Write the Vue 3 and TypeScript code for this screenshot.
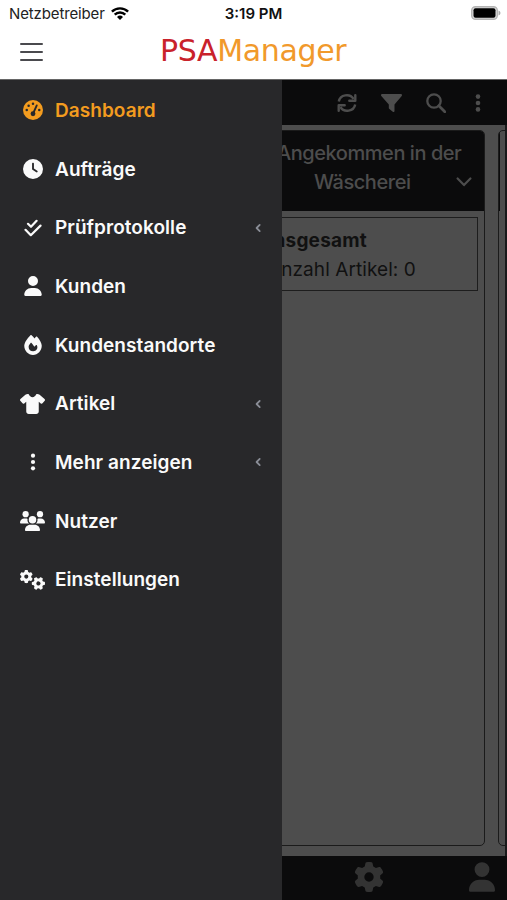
<script setup lang="ts">
interface MenuEntry {
  icon: string
  label: string
  active?: boolean
  expandable?: boolean
}

const entries: MenuEntry[] = [
  { icon: 'gauge', label: 'Dashboard', active: true },
  { icon: 'clock', label: 'Aufträge' },
  { icon: 'checks', label: 'Prüfprotokolle', expandable: true },
  { icon: 'user', label: 'Kunden' },
  { icon: 'fire', label: 'Kundenstandorte' },
  { icon: 'shirt', label: 'Artikel', expandable: true },
  { icon: 'dots', label: 'Mehr anzeigen', expandable: true },
  { icon: 'users', label: 'Nutzer' },
  { icon: 'gears', label: 'Einstellungen' },
]

const gear =
  'M495.9 166.6c3.2 8.7 .5 18.4-6.4 24.6l-43.3 39.4c1.1 8.3 1.7 16.8 1.7 25.4s-.6 17.1-1.7 25.4l43.3 39.4c6.9 6.2 9.6 15.9 6.4 24.6c-4.4 11.9-9.7 23.3-15.8 34.3l-4.7 8.1c-6.6 11-14 21.4-22.1 31.2c-5.9 7.2-15.7 9.6-24.5 6.8l-55.7-17.7c-13.4 10.3-28.2 18.9-44 25.4l-12.5 57.1c-2 9.1-9 16.3-18.2 17.8c-13.8 2.3-28 3.5-42.5 3.5s-28.7-1.2-42.5-3.5c-9.2-1.5-16.2-8.7-18.2-17.8l-12.5-57.1c-15.8-6.5-30.6-15.1-44-25.4L83.1 425.9c-8.8 2.8-18.6 .3-24.5-6.8c-8.1-9.8-15.5-20.2-22.1-31.2l-4.7-8.1c-6.1-11-11.4-22.4-15.8-34.3c-3.2-8.7-.5-18.4 6.4-24.6l43.3-39.4C64.6 273.1 64 264.6 64 256s.6-17.1 1.7-25.4L22.4 191.2c-6.9-6.2-9.6-15.9-6.4-24.6c4.4-11.9 9.7-23.3 15.8-34.3l4.7-8.1c6.6-11 14-21.4 22.1-31.2c5.9-7.2 15.7-9.6 24.5-6.8l55.7 17.7c13.4-10.3 28.2-18.9 44-25.4l12.5-57.1c2-9.1 9-16.3 18.2-17.8C227.3 1.2 241.5 0 256 0s28.7 1.2 42.5 3.5c9.2 1.5 16.2 8.7 18.2 17.8l12.5 57.1c15.8 6.5 30.6 15.1 44 25.4l55.7-17.7c8.8-2.8 18.6-.3 24.5 6.8c8.1 9.8 15.5 20.2 22.1 31.2l4.7 8.1c6.1 11 11.4 22.4 15.8 34.3zM256 336a80 80 0 1 0 0-160 80 80 0 1 0 0 160z'
const user =
  'M224 256A128 128 0 1 0 224 0a128 128 0 1 0 0 256zm-45.7 48C79.8 304 0 383.8 0 482.3C0 498.7 13.3 512 29.7 512H418.3c16.4 0 29.7-13.3 29.7-29.7C448 383.8 368.2 304 269.7 304H178.3z'
const shirt =
  'M211.8 0c7.8 0 14.3 5.7 16.7 13.2C240.8 51.9 277.1 80 320 80s79.2-28.1 91.5-66.8C413.9 5.7 420.4 0 428.2 0h12.6c22.5 0 44.2 7.9 61.5 22.3L628.5 127.4c6.6 5.5 10.7 13.5 11.4 22.1s-2.1 17.1-7.8 23.6l-56 64c-11.4 13.1-31.2 14.6-44.6 3.5L480 197.7V448c0 35.3-28.7 64-64 64H224c-35.3 0-64-28.7-64-64V197.7l-51.5 42.9c-13.3 11.1-33.1 9.6-44.6-3.5l-56-64c-5.7-6.5-8.5-15-7.8-23.6s4.8-16.6 11.4-22.1L137.7 22.3C155 7.9 176.7 0 199.2 0h12.6z'
const fire =
  'M159.3 5.4c7.8-7.3 19.9-7.2 27.7 .1c27.6 25.9 53.5 53.8 77.7 84c11-14.4 23.5-30.1 37-42.9c7.9-7.4 20.1-7.4 28 .1c34.6 33 63.9 76.6 84.5 118c20.3 40.8 33.8 82.5 33.8 111.9C448 404.2 348.2 512 224 512C98.4 512 0 404.1 0 276.5c0-38.4 17.8-85.3 45.4-131.7C73.3 97.7 112.7 48.6 159.3 5.4zM225.7 416c25.3 0 47.7-7 68.8-21c42.1-29.4 53.4-88.2 28.1-134.4c-4.5-9-16-9.6-22.5-2l-25.2 29.3c-6.6 7.6-18.5 7.4-24.7-.5c-16.5-21-46-58.5-62.8-79.8c-6.3-8-18.3-8.1-24.7-.1c-33.8 42.5-50.8 69.3-50.8 99.4C112 375.4 162.6 416 225.7 416z'
const clock =
  'M256 0a256 256 0 1 1 0 512A256 256 0 1 1 256 0zM232 120V256c0 8 4 15.5 10.7 20l96 64c11 7.4 25.9 4.4 33.3-6.7s4.4-25.9-6.7-33.3L280 243.2V120c0-13.3-10.7-24-24-24s-24 10.7-24 24z'
</script>

<template>
  <div class="app">
    <div class="status">
      <span class="carrier">Netzbetreiber</span>
      <svg class="wifi" viewBox="0 0 18 13" width="18" height="13">
        <g fill="none" stroke="#000" stroke-width="2.4">
          <path d="M.9 4.700a11.500 11.500 0 0 1 16.200 0" />
          <path d="M3.700 7.700a7.500 7.500 0 0 1 10.600 0" />
        </g>
        <path d="M9 13 6 9.900a4.300 4.300 0 0 1 6 0z" />
      </svg>
      <span class="time">3:19 PM</span>
      <svg class="battery" viewBox="0 0 30 14" width="30" height="14">
        <rect x=".7" y=".7" width="25.600" height="12.600" rx="3.800" fill="#ddd" stroke="#b4b4b4" stroke-width="1.400" />
        <rect x="2.500" y="2.300" width="22" height="9.400" rx="2" />
        <path d="M27.500 4.500c2.600 1 2.600 4 0 5z" fill="#aaa" />
      </svg>
    </div>

    <header class="brandbar">
      <button class="burger" aria-label="Menü"><i /><i /><i /></button>
      <div class="logo"><span>PSA</span>Manager</div>
    </header>

    <div class="stage">
      <main class="page">
        <div class="toolbar">
          <svg width="20" height="20" viewBox="0 0 20 20" fill="none" stroke="currentColor" stroke-width="2.400">
            <path d="M1.800 8.500A8 7.500 0 0 1 16.600 6M18.200 11.500A8 7.500 0 0 1 3.400 14" />
            <path d="M18.300 2.200v5.600h-6M1.700 17.800v-5.600h6" stroke-linejoin="round" stroke-linecap="round" />
          </svg>
          <svg width="21" height="18" viewBox="0 0 21 18" fill="currentColor">
            <path d="M1.200 0h18.600c1 0 1.500 1.100.9 1.900L13.500 10.400v6.500c0 .9-1 1.400-1.700.8l-3.400-2.600c-.4-.3-.6-.6-.6-1.100v-3.600L.3 1.900C-.3 1.100.2 0 1.200 0z" />
          </svg>
          <svg width="20" height="20" viewBox="0 0 20 20" fill="none" stroke="currentColor" stroke-width="2.300">
            <circle cx="8" cy="8" r="6.700" /><path d="m12.800 12.800 6 6" stroke-linecap="round" stroke-width="2.700" />
          </svg>
          <svg class="more" width="6" height="18" viewBox="0 0 6 18" fill="currentColor">
            <circle cx="3" cy="2.600" r="2.300" /><circle cx="3" cy="9" r="2.300" /><circle cx="3" cy="15.400" r="2.300" />
          </svg>
        </div>

        <div class="board">
          <section class="column">
            <div class="column-head">
              <span class="first">Angekommen in der</span>
              <span class="second">Wäscherei</span>
              <svg class="down" width="16" height="10" viewBox="0 0 16 10" fill="none" stroke="currentColor" stroke-width="2.200" stroke-linecap="round" stroke-linejoin="round">
                <path d="m1.600 1.500 6.400 6.600 6.400-6.600" />
              </svg>
            </div>
            <article class="card">
              <strong>Insgesamt</strong>
              <span>Anzahl Artikel: 0</span>
            </article>
          </section>
          <section class="column next"><div class="edge" /></section>
        </div>

        <footer class="tabs">
          <svg width="30" height="30" viewBox="0 0 512 512" fill="currentColor"><path :d="gear" /></svg>
          <svg width="26" height="30" viewBox="0 0 448 512" fill="currentColor"><path :d="user" /></svg>
        </footer>
      </main>

      <nav class="drawer">
        <a v-for="e in entries" :key="e.label" class="entry" :class="{ active: e.active }">
          <span class="glyph">
            <svg v-if="e.icon === 'gauge'" width="20" height="20" viewBox="0 0 512 512">
              <circle cx="256" cy="256" r="256" fill="currentColor" />
              <g fill="#28282a">
                <circle cx="256" cy="96" r="32" /><circle cx="144" cy="144" r="32" />
                <circle cx="96" cy="256" r="32" /><circle cx="416" cy="256" r="32" />
                <circle cx="256" cy="352" r="62" />
              </g>
              <path d="m256 352 96-213" stroke="#28282a" stroke-width="48" stroke-linecap="round" />
            </svg>
            <svg v-else-if="e.icon === 'clock'" width="20" height="20" viewBox="0 0 512 512"><path :d="clock" fill="currentColor" /></svg>
            <svg v-else-if="e.icon === 'checks'" width="18" height="18" viewBox="0 0 18 18" fill="none" stroke="currentColor" stroke-width="2.200" stroke-linecap="round" stroke-linejoin="round">
              <path d="m4 4.800 3 3 5.600-6M1.500 10.800l5.300 5.400 9.700-9.600" />
            </svg>
            <svg v-else-if="e.icon === 'user'" width="18" height="20" viewBox="0 0 448 512"><path :d="user" fill="currentColor" /></svg>
            <svg v-else-if="e.icon === 'fire'" width="18" height="20" viewBox="0 0 448 512"><path :d="fire" fill="currentColor" /></svg>
            <svg v-else-if="e.icon === 'shirt'" width="25" height="20" viewBox="0 0 640 512"><path :d="shirt" fill="currentColor" /></svg>
            <svg v-else-if="e.icon === 'dots'" width="6" height="18" viewBox="0 0 6 18" fill="currentColor">
              <circle cx="3" cy="2.700" r="2.100" /><circle cx="3" cy="9" r="2.100" /><circle cx="3" cy="15.300" r="2.100" />
            </svg>
            <svg v-else-if="e.icon === 'users'" width="25" height="20" viewBox="0 0 640 512" fill="currentColor">
              <circle cx="144" cy="80" r="80" /><circle cx="512" cy="80" r="80" /><circle cx="320" cy="224" r="96" />
              <path d="M0 298.700C0 239.800 47.800 192 106.700 192h42.700c15.900 0 31 3.500 44.600 9.700C182 250 200 293 235.200 320H21.300C9.600 320 0 310.400 0 298.700zM405 320c35-27 53-70 41-118.300 14-6.200 29-9.700 45-9.700h42.700C592.200 192 640 239.800 640 298.700c0 11.700-9.600 21.300-21.300 21.300zM128 485.300C128 411.700 187.700 352 261.300 352h117.400C452.300 352 512 411.700 512 485.300c0 14.700-12 26.700-26.700 26.700H154.700c-14.700 0-26.700-12-26.700-26.700z" />
            </svg>
            <svg v-else width="25" height="20" viewBox="0 0 640 512" fill="currentColor">
              <path :d="gear" transform="translate(-8 0) scale(.66)" />
              <path :d="gear" transform="translate(471 344) rotate(30) scale(.66) translate(-256 -256)" />
            </svg>
          </span>
          <span class="label">{{ e.label }}</span>
          <svg v-if="e.expandable" class="caret" width="6" height="10" viewBox="0 0 6 10" fill="none" stroke="#8a8d96" stroke-width="1.800" stroke-linecap="round" stroke-linejoin="round">
            <path d="M4.700 1.900 1.600 5l3.100 3.100" />
          </svg>
        </a>
      </nav>
    </div>
  </div>
</template>

<style>
body { margin: 0; background: #fff; }
</style>

<style scoped>
* { box-sizing: border-box; }
.app {
  width: 507px;
  height: 900px;
  display: flex;
  flex-direction: column;
  overflow: hidden;
  background: #fff;
  font-family: Inter, "Liberation Sans", sans-serif;
}
.status {
  height: 28px;
  display: grid;
  grid-template-columns: auto auto 1fr auto;
  align-items: center;
  padding: 0 6px 2px 9px;
  color: #111;
  font-size: 15px;
}
.carrier { letter-spacing: -0.13px; color: #222; }
.wifi { margin-left: 6px; }
.time { padding-left: 96px; font-weight: 600; }
.brandbar {
  height: 51px;
  display: flex;
  align-items: center;
  padding: 0 20px 4px;
}
.burger {
  width: 23px;
  padding: 0;
  border: 0;
  background: none;
  display: flex;
  flex-direction: column;
  gap: 6px;
}
.burger i { height: 2px; border-radius: 1px; background: #4a4a4e; }
.logo {
  margin: -2px 0 0 117px;
  font-family: "DejaVu Sans", sans-serif;
  font-size: 30px;
  letter-spacing: -0.35px;
  line-height: 40px;
  color: #f1992b;
}
.logo span { color: #c9222b; }
.stage { flex: 1; display: grid; min-height: 0; border-top: 1px solid #666; }
.page, .drawer { grid-area: 1 / 1; min-height: 0; }
.page { display: flex; flex-direction: column; background: #4d4d4d; min-width: 0; }
.toolbar {
  height: 45px;
  display: flex;
  align-items: center;
  justify-content: flex-end;
  gap: 24px;
  padding-right: 26px;
  background: #0b0b0c;
  color: #4d4d4d;
}
.more { margin-left: 5px; }
.board {
  flex: 1;
  display: flex;
  gap: 13px;
  padding: 5px 0 10px 248px;
  overflow: hidden;
  border-right: 2px solid #19191a;
}
.column {
  flex: 0 0 237px;
  border: 1.5px solid #1b1b1b;
  border-radius: 5px;
  overflow: hidden;
}
.edge { width: 1px; height: 80px; background: #0b0b0c; }
.column-head {
  height: 80px;
  padding-top: 7px;
  background: #0b0b0c;
  color: #4d4d4d;
  display: grid;
  grid-template: 29px 29px / 1fr 20px;
  align-items: center;
  font-size: 20px;
  font-weight: 500;
  letter-spacing: -0.45px;
}
.first { grid-column: 1 / 3; padding-left: 28px; white-space: nowrap; }
.second { padding-left: 65px; }
.down { justify-self: end; margin-right: 12px; }
.card {
  margin: 6px 6px 0 8px;
  height: 74px;
  padding: 8px 0 0 10px;
  border: 1.5px solid #1d1d1d;
  display: flex;
  flex-direction: column;
  font-size: 19px;
  line-height: 29px;
  letter-spacing: 0.08px;
  color: #111;
}
.card strong { font-weight: 700; letter-spacing: 0.2px; }
.tabs {
  height: 44px;
  display: flex;
  justify-content: flex-end;
  gap: 85px;
  padding: 6px 12px 0 0;
  background: #0b0b0c;
  color: #333;
}
.drawer {
  width: 282px;
  padding-top: 1px;
  background: #28282a;
  z-index: 1;
}
.entry {
  height: 58.7px;
  display: flex;
  align-items: center;
  padding: 0 21px 0 20px;
  color: #fafafa;
  font-size: 19px;
  font-weight: 600;
  letter-spacing: 0.06px;
}
.active { color: #f39c1f; }
.glyph { width: 25px; display: flex; justify-content: center; }
.label { margin-left: 10px; flex: 1; }
svg { display: block; flex: none; }
</style>
